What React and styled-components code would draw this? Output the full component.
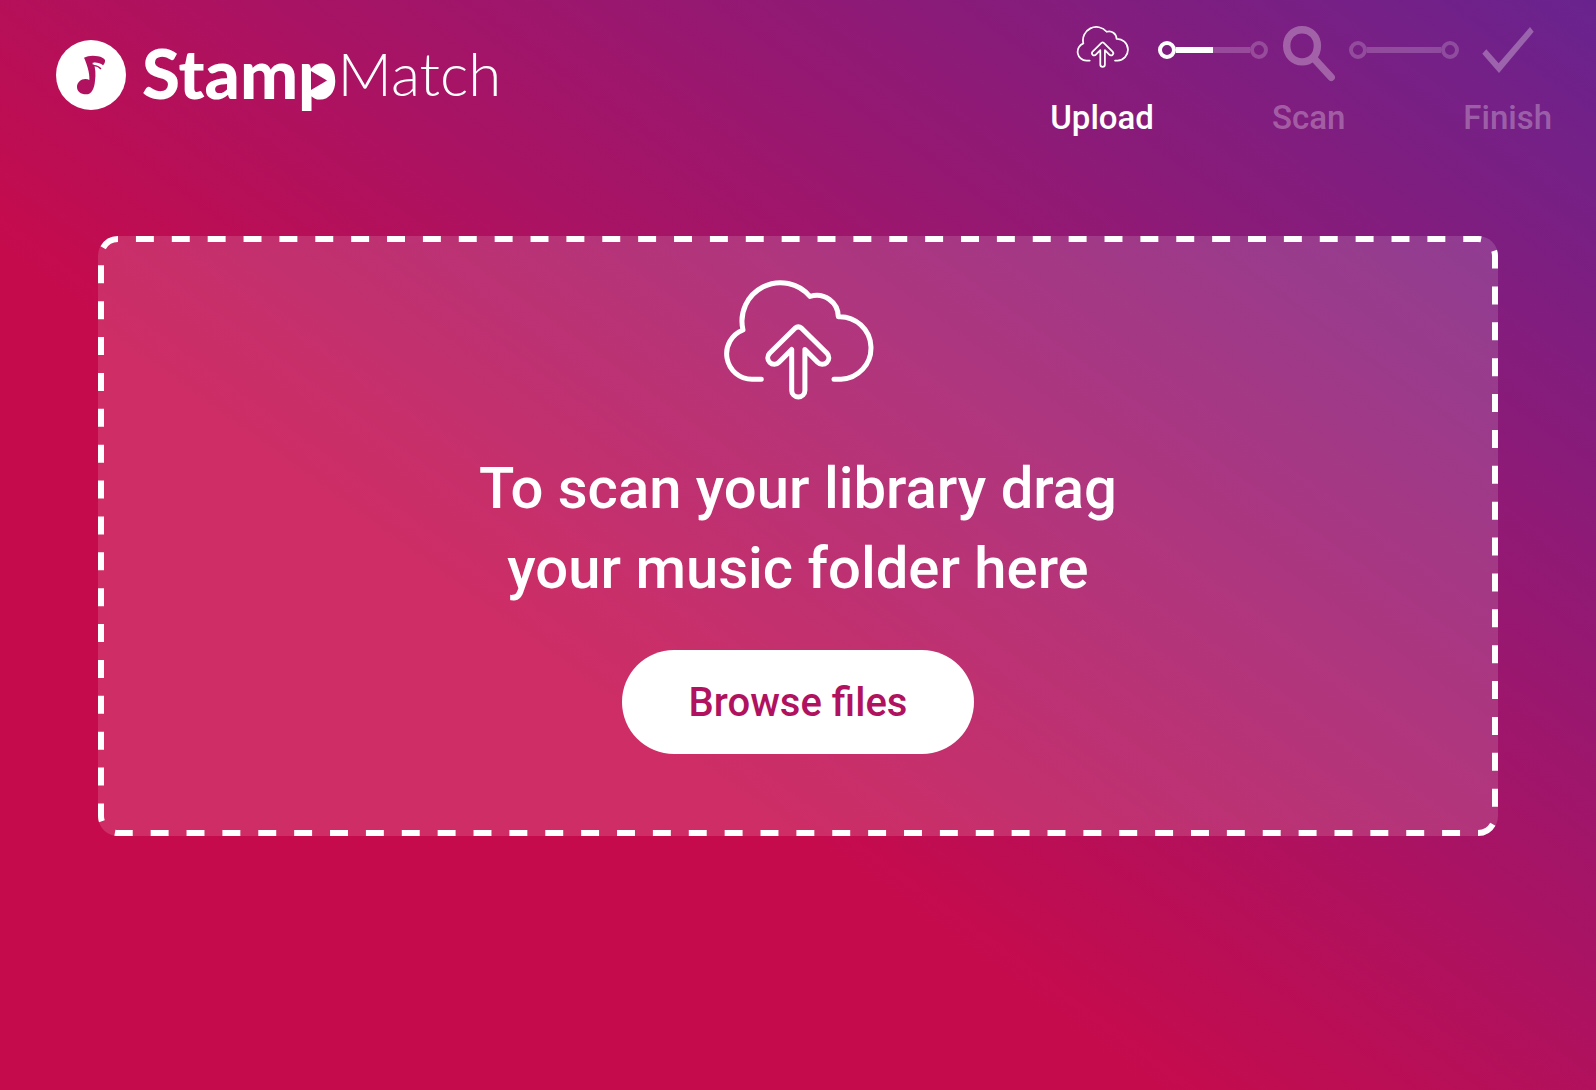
import React from 'react';
import styled, { createGlobalStyle } from 'styled-components';

const steps = [
    { label: 'Upload', icon: 'upload', active: true, progress: 50 },
    { label: 'Scan', icon: 'scan', active: false, progress: 0 },
    { label: 'Finish', icon: 'finish', active: false },
]

const CloudIcon = ({ width }) => (
    <svg width={width} viewBox="-2 0 152 120" fill="none" stroke="currentColor" strokeWidth="5" strokeLinecap="round" strokeLinejoin="round" aria-hidden="true">
        <path d="M110 99.3H117A31.3 31.3 0 0 0 114.3 36.7A21.5 21.5 0 0 0 86 16.5A38.5 38.5 0 0 0 19 50A25.5 25.5 0 0 0 28 99.3H37.3" />
        <path d="M71 48.2L45.6 73.3A6.4 6.4 0 0 0 55 82.3L67.7 69.5V110.4A6.6 6.6 0 0 0 80.9 110.4V69.5L93.6 82.3A6.4 6.4 0 0 0 103 73.3L77.6 48.2Q74.3 45.4 71 48.2Z" />
    </svg>
)

const SearchIcon = () => (
    <svg width="52" height="56" viewBox="0 0 52 56" fill="none" stroke="currentColor" aria-hidden="true">
        <path strokeWidth="7.4" strokeLinecap="round" strokeLinejoin="round" d="M30.1 31.4C33 28.4 34.4 24.6 34.4 19.8C34.4 10.6 27.8 3.7 19 3.7C10.2 3.7 3.7 10.6 3.7 19.8C3.7 29 10.2 35.9 19 35.9C23.3 35.9 27.2 34.4 30.1 31.4L48.2 51.3" />
    </svg>
)

const CheckIcon = () => (
    <svg width="52" height="56" viewBox="0 0 52 56" fill="currentColor" aria-hidden="true">
        <path d="M0.3 27.7L4.3 23.3L16.7 37.3L48 1L51.7 5.7L17 47Z" />
    </svg>
)

const NoteLogo = () => (
    <svg width="70" height="70" viewBox="0 0 210 210" aria-hidden="true">
        <circle cx="105" cy="105" r="105" fill="#fff" />
        <path fill="#b01260" d="M84 53C95 47 112 45 126 49C136 51 144 55 147 60C148 66 145 72 141 76C133 70 124 67 113 68C118 84 120 102 117 122C115 146 107 163 90 163C74 163 63 154 63 141C63 127 75 117 88 117C93 117 97 118 100 120C102 99 92 70 84 53Z" />
        <path fill="none" stroke="#fff" strokeWidth="5" d="M110 71C122 70 132 73 141 84" />
        <path fill="none" stroke="#b01260" strokeWidth="4" d="M114 77C123 77 129 80 135 87" />
    </svg>
)

const icons = {
    upload: <CloudIcon width="53" />,
    scan: <SearchIcon />,
    finish: <CheckIcon />,
}

export default function App() {
    return (
        <>
            <GlobalStyle />
            <Page>
                <Header>
                    <Logo href="#">
                        <NoteLogo />
                        <LogoText>
                            <LogoBold>
                                Stamp
                                <PlayMark viewBox="0 0 20 24" aria-hidden="true">
                                    <rect width="18" height="24" fill="#fff" />
                                    <path d="M1 2L17 11.5L1 21Z" fill="#ab1363" />
                                </PlayMark>
                            </LogoBold>
                            <LogoThin>Match</LogoThin>
                        </LogoText>
                    </Logo>
                    <Steps>
                        {steps.map((step) =>
                            <StepItem key={step.label}>
                                <Step $active={step.active}>
                                    <StepIcon>{icons[step.icon]}</StepIcon>
                                    <StepLabel>{step.label}</StepLabel>
                                </Step>
                                {step.progress !== undefined &&
                                    <Connector>
                                        <Dot $active={step.progress > 0} />
                                        <Track><TrackFill style={{ width: `${step.progress}%` }} /></Track>
                                        <Dot />
                                    </Connector>
                                }
                            </StepItem>
                        )}
                    </Steps>
                </Header>
                <DropZone>
                    <DashedFrame aria-hidden="true">
                        <rect x="3" y="3" rx="17" pathLength="220" />
                    </DashedFrame>
                    <CloudIcon width="152" />
                    <Title>To scan your library drag your music folder here</Title>
                    <BrowseButton type="button">Browse files</BrowseButton>
                </DropZone>
            </Page>
        </>
    )
}

const GlobalStyle = createGlobalStyle`
  * {
    box-sizing: border-box;
  }
  body {
    margin: 0;
    font-family: Roboto, "Liberation Sans", sans-serif;
  }
`
const Page = styled.main`
  min-height: 100vh;
  color: #ffffff;
  background: linear-gradient(216deg, #69238e 0%, #9e166c 35%, #c60b4c 63%);
`
const Header = styled.header`
  display: flex;
  justify-content: space-between;
  align-items: flex-start;
  padding: 26px 44px 0 56px;
`
const Logo = styled.a`
  display: flex;
  align-items: center;
  gap: 16px;
  margin-top: 14px;
  color: inherit;
  text-decoration: none;
`
const LogoText = styled.span`
  display: flex;
  align-items: center;
  padding-bottom: 4px;
  font-family: Lato, sans-serif;
  line-height: 64px;
`
const LogoBold = styled.span`
  position: relative;
  font-size: 69px;
  font-weight: 900;
`
const PlayMark = styled.svg`
  position: absolute;
  right: 7px;
  bottom: 12px;
  width: 20px;
  height: 24px;
`
const LogoThin = styled.span`
  font-size: 60px;
  font-weight: 300;
`
const Steps = styled.ol`
  display: flex;
  margin: 0;
  padding: 0;
  list-style: none;
  gap: 4px;
`
const StepItem = styled.li`
  display: flex;
  gap: 4px;
`
const Step = styled.div`
  display: flex;
  flex-direction: column;
  align-items: center;
  gap: 16px;
  color: ${({ $active }) => $active ? '#ffffff' : 'rgba(255, 255, 255, 0.3)'};
`
const StepIcon = styled.div`
  display: flex;
  align-items: flex-start;
  height: 56px;
`
const StepLabel = styled.span`
  font-size: 33px;
  line-height: 40px;
  font-weight: 500;
`
const Connector = styled.div`
  display: flex;
  align-items: center;
  width: 110px;
  height: 18px;
  margin-top: 15px;
`
const Dot = styled.span`
  width: 18px;
  height: 18px;
  border: 4px solid ${({ $active }) => $active ? '#ffffff' : 'rgba(255, 255, 255, 0.2)'};
  border-radius: 50%;
`
const Track = styled.span`
  flex: 1;
  height: 6px;
  background: rgba(255, 255, 255, 0.2);
`
const TrackFill = styled.span`
  display: block;
  height: 100%;
  background: #ffffff;
`
const DropZone = styled.section`
  position: relative;
  display: flex;
  flex-direction: column;
  align-items: center;
  min-height: 600px;
  margin: 98px 98px 0;
  padding: 44px 48px;
  border-radius: 20px;
  background: rgba(255, 255, 255, 0.14);
`
const DashedFrame = styled.svg`
  position: absolute;
  inset: 0;
  width: 100%;
  height: 100%;
  pointer-events: none;

  rect {
    width: calc(100% - 6px);
    height: calc(100% - 6px);
    fill: none;
    stroke: #ffffff;
    stroke-width: 6px;
    stroke-dasharray: 1 1;
    stroke-dashoffset: 1;
  }
`
const Title = styled.h1`
  max-width: 720px;
  margin: 48px 0 42px;
  font-size: 58px;
  line-height: 80px;
  font-weight: 500;
  text-align: center;
`
const BrowseButton = styled.button`
  height: 104px;
  padding: 0 67px;
  border: none;
  border-radius: 52px;
  background: #ffffff;
  color: #b01260;
  font-family: inherit;
  font-size: 40px;
  font-weight: 500;
  cursor: pointer;
`
